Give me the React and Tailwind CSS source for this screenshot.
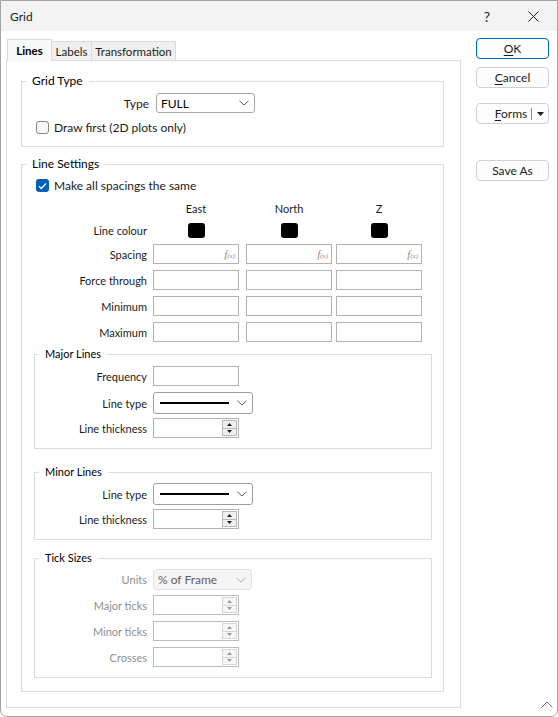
import React from 'react';

const FONT = "font-[Lato,'Liberation_Sans',sans-serif]";

function Chevron({ color = '#5a5a5a' }) {
  return (
    <svg width="10" height="6" viewBox="0 0 10 6" className="shrink-0">
      <path d="M0.5 0.8 L5 5 L9.5 0.8" fill="none" stroke={color} strokeWidth="1" />
    </svg>
  );
}

function Checkbox({ checked }) {
  if (checked) {
    return (
      <div className="w-[13px] h-[13px] rounded-[3px] bg-[#005fb8] flex items-center justify-center shrink-0">
        <svg width="9" height="8" viewBox="0 0 9 8">
          <path d="M1 4.2 L3.3 6.5 L8 1.5" fill="none" stroke="#fff" strokeWidth="1.3" />
        </svg>
      </div>
    );
  }
  return <div className="w-[13px] h-[13px] rounded-[3px] border border-[#878787] bg-[#f7f7f7] shrink-0" />;
}

function TextBox({ fx }) {
  return (
    <div className="w-[86px] h-[20px] border border-[#b2b2b2] bg-white flex items-center justify-end pr-[3px] shrink-0">
      {fx && (
        <span className="font-['Liberation_Serif',serif] italic text-[#8c8c8c] leading-none">
          <span className="text-[11px]">f</span>
          <span className="text-[7px]">(x)</span>
        </span>
      )}
    </div>
  );
}

function Spinner({ disabled }) {
  const btn = disabled ? 'bg-[#f6f6f6] border-[#d6d6d6]' : 'bg-[#efefef] border-[#b9b9b9]';
  const tri = disabled ? '#9a9a9a' : '#1a1a1a';
  return (
    <div
      className={`w-[86px] h-[20px] border bg-white flex items-center justify-end pr-[1px] shrink-0 ${
        disabled ? 'border-[#bdbdbd]' : 'border-[#b2b2b2]'
      }`}
    >
      <div className={`w-[15px] h-[16px] border ${btn} flex flex-col`}>
        <div className="flex-1 flex items-center justify-center">
          <svg width="5" height="3" viewBox="0 0 5 3">
            <path d="M0 3 L2.5 0 L5 3 Z" fill={tri} />
          </svg>
        </div>
        <div className={`h-px ${disabled ? 'bg-[#d6d6d6]' : 'bg-[#b9b9b9]'}`} />
        <div className="flex-1 flex items-center justify-center">
          <svg width="5" height="3" viewBox="0 0 5 3">
            <path d="M0 0 L5 0 L2.5 3 Z" fill={tri} />
          </svg>
        </div>
      </div>
    </div>
  );
}

function LineSelect() {
  return (
    <div className="w-[100px] h-[22px] border border-[#9e9e9e] rounded-[3px] bg-white flex items-center pl-[6px] pr-[5px] shrink-0">
      <div className="w-[69px] h-[2px] bg-black" />
      <div className="flex-1" />
      <Chevron />
    </div>
  );
}

// field label rows use the smaller dialog font
function Row({ label, labelW, gap = 6, mt, disabled, small = true, children }) {
  return (
    <div className={`flex items-center ${mt}`}>
      <div
        className={`text-right shrink-0 ${small ? 'text-[11px]' : ''} ${disabled ? 'text-[#8f8f8f]' : 'text-[#1b1b1b]'}`}
        style={{ width: labelW, marginRight: gap }}
      >
        {label}
      </div>
      {children}
    </div>
  );
}

function Group({ title, small, className = '', children }) {
  return (
    <fieldset className={`border border-[#dcdcdc] ${className}`}>
      <legend className={`ml-[4px] px-[6px] leading-[16px] text-black ${small ? 'text-[11px]' : ''}`}>{title}</legend>
      {children}
    </fieldset>
  );
}

function Button({ children, primary, className = '' }) {
  return (
    <div
      className={`h-[21px] rounded-[4px] border bg-[#fdfdfd] flex items-center justify-center text-[#1b1b1b] ${
        primary ? 'border-[#0067c0]' : 'border-[#d0d0d0]'
      } ${className}`}
    >
      {children}
    </div>
  );
}

const cols = [
  { name: 'East', ml: 0 },
  { name: 'North', ml: 7 },
  { name: 'Z', ml: 4 },
];

export default function App() {
  return (
    <div className={`w-[558px] h-[717px] bg-white border border-[#a3a3a3] rounded-b-[7px] overflow-hidden text-[12px] leading-[15px] flex flex-col ${FONT}`}>
      {/* title bar */}
      <div className="h-[30px] bg-[#f3f3f3] flex items-center shrink-0">
        <div className="ml-[9px] text-[#1b1b1b]">Grid</div>
        <div className="flex-1" />
        <div className="text-[14px] text-[#1b1b1b] mr-[38px]">?</div>
        <svg width="11" height="11" viewBox="0 0 11 11" className="mr-[18px]">
          <path d="M0.5 0.5 L10.5 10.5 M10.5 0.5 L0.5 10.5" stroke="#1b1b1b" strokeWidth="1" />
        </svg>
      </div>

      <div className="flex flex-1 relative">
        {/* left side: tabs */}
        <div className="pl-[5px] pt-[7px] w-[460px] shrink-0">
          <div className="flex items-end h-[22px] text-[11.5px]">
            <div className="ml-[1px] w-[45px] h-[22px] border border-b-0 border-[#dadada] bg-[#f9f9f9] flex items-center justify-center font-bold text-black relative z-10 -mb-px pb-px">
              Lines
            </div>
            <div className="w-[40px] h-[19px] border border-l-0 border-b-0 border-[#dadada] bg-[#f0f0f0] flex items-center justify-center text-[#1b1b1b]">
              Labels
            </div>
            <div className="w-[84px] h-[19px] border border-l-0 border-b-0 border-[#dadada] bg-[#f0f0f0] flex items-center justify-center text-[#1b1b1b]">
              Transformation
            </div>
          </div>

          <div className="w-[455px] h-[648px] border border-[#dadada] bg-white pt-[12px] pl-[14px]">
            <Group title="Grid Type" className="w-[423px] pb-[12px]">
              <Row label="Type" labelW={127} gap={7} mt="mt-[4px]" small={false}>
                <div className="w-[99px] h-[20px] border border-[#a8a8a8] rounded-[3px] bg-white flex items-center pl-[4px] pr-[5px]">
                  <span className="flex-1 text-black">FULL</span>
                  <Chevron />
                </div>
              </Row>
              <div className="flex items-center h-[13px] mt-[8px] ml-[14px]">
                <Checkbox />
                <span className="ml-[5px] text-[#1b1b1b]">Draw first (2D plots only)</span>
              </div>
            </Group>

            <Group title="Line Settings" className="w-[423px] mt-[9px] pb-[13px]">
              <div className="flex items-center h-[13px] mt-[7px] ml-[14px]">
                <Checkbox checked />
                <span className="ml-[5px] text-[#1b1b1b]">Make all spacings the same</span>
              </div>

              <div className="flex mt-[8px] h-[16px] items-center text-[11px]">
                <div className="w-[131px] shrink-0" />
                {cols.map((c) => (
                  <div key={c.name} className="w-[86px] text-center text-[#1b1b1b]" style={{ marginLeft: c.ml }}>
                    {c.name}
                  </div>
                ))}
              </div>

              <Row label="Line colour" labelW={125} mt="mt-[6px]">
                {cols.map((c) => (
                  <div key={c.name} className="w-[86px] h-[16px] flex justify-center items-center" style={{ marginLeft: c.ml }}>
                    <div className="w-[17px] h-[15px] rounded-[3px] bg-black" />
                  </div>
                ))}
              </Row>

              {['Spacing', 'Force through', 'Minimum', 'Maximum'].map((label, i) => (
                <Row key={label} label={label} labelW={125} mt="mt-[6px]">
                  {cols.map((c) => (
                    <div key={c.name} style={{ marginLeft: c.ml }}>
                      <TextBox fx={i === 0} />
                    </div>
                  ))}
                </Row>
              ))}

              <Group title="Major Lines" small className="w-[398px] ml-[12px] mt-[4px] pb-[10px]">
                <Row label="Frequency" labelW={112} mt="mt-[4px]">
                  <TextBox />
                </Row>
                <Row label="Line type" labelW={112} mt="mt-[6px]">
                  <LineSelect />
                </Row>
                <Row label="Line thickness" labelW={112} mt="mt-[4px]">
                  <Spinner />
                </Row>
              </Group>

              <Group title="Minor Lines" small className="w-[398px] ml-[12px] mt-[15px] pb-[10px]">
                <Row label="Line type" labelW={112} mt="mt-[3px]">
                  <LineSelect />
                </Row>
                <Row label="Line thickness" labelW={112} mt="mt-[4px]">
                  <Spinner />
                </Row>
              </Group>

              <Group title="Tick Sizes" small className="w-[398px] ml-[12px] mt-[10px] pb-[10px]">
                <Row label="Units" labelW={112} mt="mt-[3px]" disabled>
                  <div className="w-[99px] h-[21px] border border-[#e3e3e3] rounded-[3px] bg-[#f5f5f5] flex items-center pl-[4px] pr-[5px]">
                    <span className="flex-1 text-[#5e5e5e]">% of Frame</span>
                    <Chevron color="#b0b0b0" />
                  </div>
                </Row>
                <Row label="Major ticks" labelW={112} mt="mt-[5px]" disabled>
                  <Spinner disabled />
                </Row>
                <Row label="Minor ticks" labelW={112} mt="mt-[6px]" disabled>
                  <Spinner disabled />
                </Row>
                <Row label="Crosses" labelW={112} mt="mt-[6px]" disabled>
                  <Spinner disabled />
                </Row>
              </Group>
            </Group>
          </div>
        </div>

        {/* right side: buttons */}
        <div className="ml-[15px] pt-[7px] w-[73px] flex flex-col">
          <Button primary>
            <span><u className="underline-offset-2">O</u>K</span>
          </Button>
          <Button className="mt-[8px]">
            <span><u className="underline-offset-2">C</u>ancel</span>
          </Button>
          <div className="mt-[15px] h-[21px] rounded-[4px] border border-[#d0d0d0] bg-[#fdfdfd] flex items-center text-[#1b1b1b]">
            <div className="flex-1 text-center pl-[14px]">
              <u className="underline-offset-2">F</u>orms
            </div>
            <div className="w-px h-[12px] bg-[#8a8a8a]" />
            <div className="w-[16px] flex justify-center">
              <svg width="7" height="4" viewBox="0 0 7 4">
                <path d="M0 0 L7 0 L3.5 4 Z" fill="#1b1b1b" />
              </svg>
            </div>
          </div>
          <Button className="mt-[36px]">Save As</Button>
        </div>

        {/* resize grip */}
        <svg width="12" height="7" viewBox="0 0 12 7" className="absolute right-[4px] bottom-[8px]">
          <path d="M0.5 6.5 L6 1 L11.5 6.5" fill="none" stroke="#6e6e6e" strokeWidth="1" />
        </svg>
      </div>
    </div>
  );
}
